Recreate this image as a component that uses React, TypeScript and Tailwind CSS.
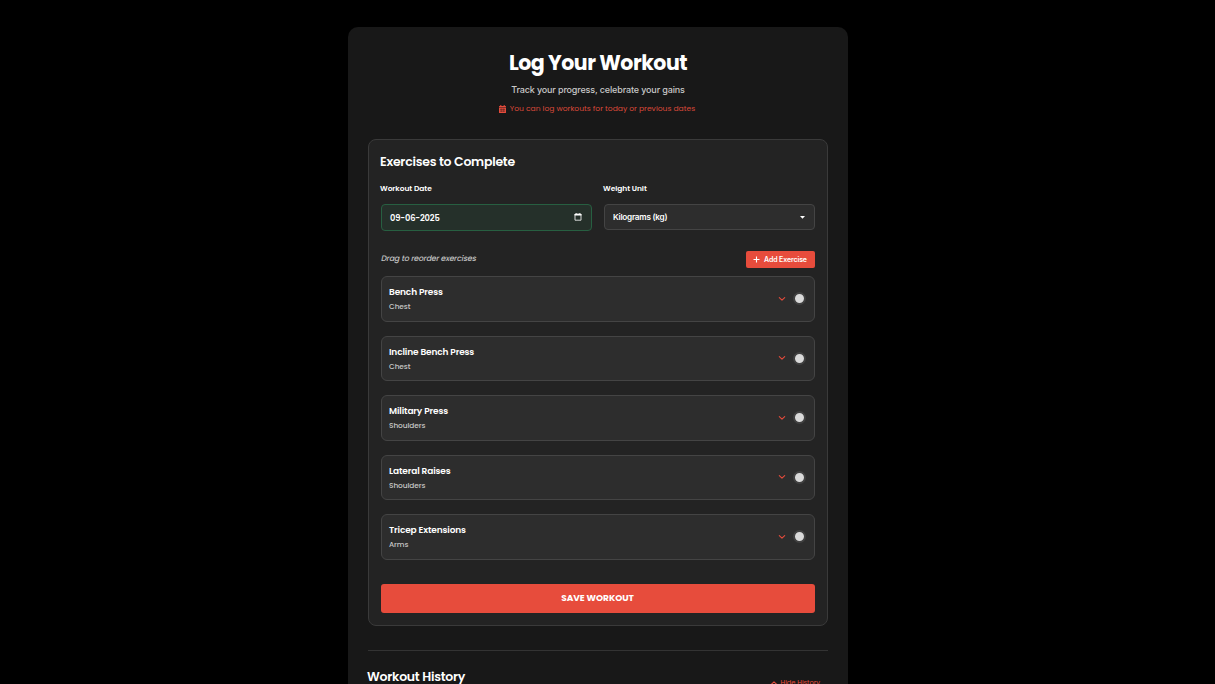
import { useState } from 'react';

const exercises = [
  { name: 'Bench Press', group: 'Chest' },
  { name: 'Incline Bench Press', group: 'Chest' },
  { name: 'Military Press', group: 'Shoulders' },
  { name: 'Lateral Raises', group: 'Shoulders' },
  { name: 'Tricep Extensions', group: 'Arms' },
];

function Chevron({ up = false }: { up?: boolean }) {
  return (
    <svg viewBox="0 0 8 6" className={up ? 'h-[6px] w-[8px] rotate-180' : 'h-[6px] w-[8px]'} fill="none" stroke="#e74c3c" strokeWidth="1.1" strokeLinecap="round" strokeLinejoin="round">
      <path d="M1.3 1.7 4 4.2 6.7 1.7" />
    </svg>
  );
}

function CalendarIcon() {
  return (
    <svg viewBox="0 0 7 8" className="mt-px h-[8px] w-[7px]">
      <path d="M1.3 0h1v1h2.4V0h1v1H6.4q.6 0 .6.6V7.4q0 .6-.6.6H.6Q0 8 0 7.4V1.6Q0 1 .6 1h.7z" fill="#e74c3c" />
      <path d="M0 2.5h7M.9 4.3h5.2M.9 6.1h5.2" stroke="#181818" strokeWidth=".5" />
      <path d="M2.4 3.5v3.5M4.6 3.5v3.5" stroke="#181818" strokeWidth=".25" />
    </svg>
  );
}

function Exercise({ item }: { item: (typeof exercises)[number] }) {
  const [done, setDone] = useState(false);
  return (
    <li className="flex h-[45.5px] items-center justify-between rounded-[6px] border border-[#444] bg-[#2d2d2d] pr-[8px] pl-[7px]">
      <div className="flex flex-col pt-[2px]">
        <span className="text-[9px] leading-[14px] font-semibold tracking-[-0.14px] whitespace-nowrap text-white">{item.name}</span>
        <span className="text-[7.4px] leading-[15px] font-medium tracking-[-0.08px] whitespace-nowrap text-[#c8c8c8]">{item.group}</span>
      </div>
      <div className="flex items-center gap-[7px]">
        <Chevron />
        <button
          aria-label={item.name}
          onClick={() => setDone(!done)}
          className={`h-[13px] w-[13px] rounded-full border-2 border-[#404040] ${done ? 'bg-[#e74c3c]' : 'bg-[#d9d9d9]'}`}
        />
      </div>
    </li>
  );
}

export default function App() {
  return (
    <div className="flex h-[684px] overflow-hidden bg-black pt-[27px] pl-[348px] font-['Poppins','Inter',sans-serif] text-white">
      <main className="h-[720px] w-[500px] shrink-0 rounded-t-[10px] bg-[#181818] px-[20px]">
        <header className="flex h-[112px] flex-col items-center">
          <h1 className="mt-[20px] text-[20.5px] leading-[32px] font-bold tracking-[-0.5px] whitespace-nowrap">Log Your Workout</h1>
          <p className="mt-[4px] font-['Inter',sans-serif] text-[9px] leading-[14px] font-medium tracking-[-0.14px] whitespace-nowrap text-[#c8c8c8]">Track your progress, celebrate your gains</p>
          <p className="mt-[5px] mr-[2px] flex items-center gap-[4px] text-[7.6px] leading-[13px] whitespace-nowrap text-[#d94838]">
            <CalendarIcon />
            <span>You can log workouts for today or previous dates</span>
          </p>
        </header>

        <section className="h-[487px] rounded-[8px] border border-[#3a3a3a] bg-[#232323] px-[12px]">
          <h2 className="mt-[12px] ml-[-1px] text-[12.5px] leading-[20px] font-semibold tracking-[-0.25px] whitespace-nowrap">Exercises to Complete</h2>
          <div className="mt-[10px] grid grid-cols-2 gap-[12px]">
            <div>
              <div className="ml-[-1px] text-[7.5px] leading-[14px] font-semibold tracking-[-0.05px] whitespace-nowrap">Workout Date</div>
              <div className="mt-[8px] flex h-[27px] items-center justify-between rounded-[4px] border border-[#275f41] bg-[#25302a] pr-[9px] pl-[8px]">
                <span className="pt-px text-[8.3px] font-semibold tracking-[-0.15px]">09-06-2025</span>
                <svg viewBox="0 0 8 8" className="mb-px h-[8px] w-[8px]">
                  <path d="M1 1h6v6.2H1z" fill="none" stroke="white" strokeWidth=".8" />
                  <path d="M.6 1h6.8v1.5H.6zM1.8.2h.9V1h-.9zM5.3.2h.9V1h-.9z" fill="white" />
                </svg>
              </div>
            </div>
            <div>
              <div className="ml-[-1px] text-[7.5px] leading-[14px] font-semibold tracking-[-0.05px] whitespace-nowrap">Weight Unit</div>
              <div className="mt-[8px] flex h-[26px] items-center justify-between rounded-[4px] border border-[#444] bg-[#2d2d2d] pr-[9px] pl-[8px]">
                <span className="font-['Inter',sans-serif] text-[8.2px] font-semibold tracking-[-0.26px]">Kilograms (kg)</span>
                <svg viewBox="0 0 5 3" className="h-[3px] w-[5px]"><path d="M0 0h5L2.5 2.8z" fill="white" /></svg>
              </div>
            </div>
          </div>

          <div className="mt-[20px] flex h-[17px] justify-between">
            <span className="-skew-x-12 text-[7.9px] leading-[15px] font-medium tracking-[-0.18px] whitespace-nowrap text-[#c0c0c0]">Drag to reorder exercises</span>
            <button className="flex h-[17px] w-[69px] items-center justify-center gap-[4px] rounded-[2px] bg-[#e74c3c] pt-px pr-px text-[7px] font-semibold whitespace-nowrap">
              <svg viewBox="0 0 7 7" className="mb-px h-[7px] w-[7px]"><path d="M3.5.5v6M.5 3.5h6" stroke="white" strokeWidth="1.1" /></svg>
              <span className="font-['Inter',sans-serif] tracking-[-0.12px]">Add Exercise</span>
            </button>
          </div>

          <ul className="mt-[8px] flex flex-col gap-[14px]">
            {exercises.map((item) => <Exercise key={item.name} item={item} />)}
          </ul>
          <button className="mt-[24.5px] flex h-[29px] w-full items-center justify-center rounded-[3px] bg-[#e74c3c] pr-px text-[9px] font-bold tracking-[-0.02px]">SAVE WORKOUT</button>
        </section>

        <section className="mt-[24px] flex justify-between border-t border-[#333] pt-[16px]">
          <h2 className="ml-[-1px] text-[12.5px] leading-[20px] font-semibold tracking-[-0.25px] whitespace-nowrap">Workout History</h2>
          <button className="mt-[10px] mr-[8px] flex h-[12px] items-center gap-[3px] text-[6.7px] text-[#e74c3c]">
            <Chevron up />
            <span>Hide History</span>
          </button>
        </section>
      </main>
    </div>
  );
}
